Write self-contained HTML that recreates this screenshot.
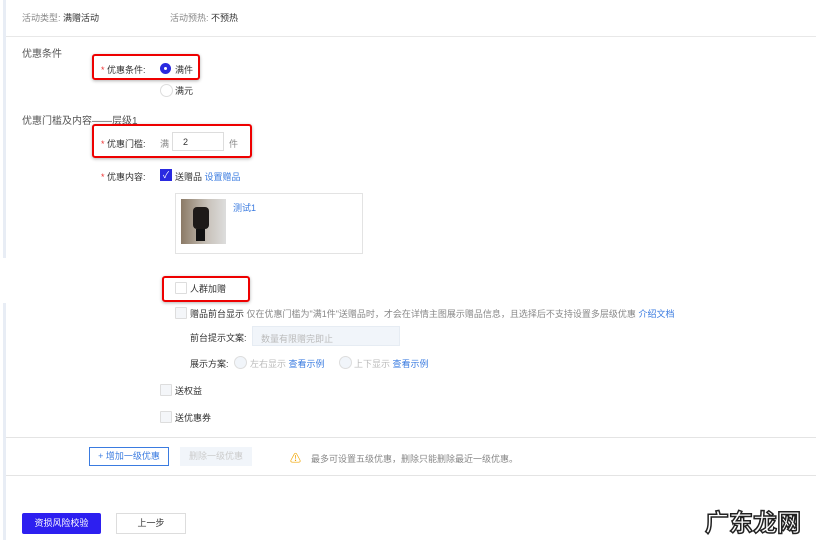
<!DOCTYPE html>
<html><head><meta charset="utf-8"><style>
body{margin:0;width:838px;height:545px;background:#fff;position:relative;overflow:hidden;font-family:"Liberation Sans","Noto Sans CJK SC",sans-serif;font-size:9px;color:#333}
.a{position:absolute;white-space:nowrap}
.g{color:#888}.b{color:#3a7be0}.r{color:#e33}
.red{position:absolute;border:2px solid #e00;border-radius:3px;box-shadow:0 1px 3px rgba(0,0,0,.3)}
.cb{position:absolute;width:10px;height:10px;border:1px solid #ddd;background:#f4f6f9;border-radius:1px}
.rd{position:absolute;width:11px;height:11px;border:1px solid #ddd;border-radius:50%;background:#fff}
</style></head><body>
<div class="a" style="left:3px;top:0;width:3px;height:258px;background:#e8edf5"></div>
<div class="a" style="left:3px;top:303px;width:3px;height:237px;background:#e8edf5"></div>
<div class="a" style="left:6px;top:36px;width:810px;height:1px;background:#e8e8e8"></div>
<div class="a g" style="left:22px;top:11px">活动类型: <span style="color:#333">满赠活动</span></div>
<div class="a g" style="left:170px;top:11px">活动预热: <span style="color:#333">不预热</span></div>
<div class="a" style="left:22px;top:45px;font-size:10px;color:#555">优惠条件</div>
<div class="red" style="left:92px;top:54px;width:104px;height:22px"></div>
<div class="a" style="left:101px;top:63px"><span class="r">*</span> 优惠条件:</div>
<div class="a" style="left:160px;top:63px;width:11px;height:11px;border-radius:50%;background:#2a2ae0"><div style="position:absolute;left:4px;top:4px;width:3px;height:3px;background:#fff;border-radius:50%"></div></div>
<div class="a" style="left:175px;top:63px">满件</div>
<div class="rd" style="left:160px;top:84px"></div>
<div class="a" style="left:175px;top:84px">满元</div>
<div class="a" style="left:22px;top:112px;font-size:10px;color:#555">优惠门槛及内容——层级1</div>
<div class="red" style="left:92px;top:124px;width:156px;height:30px"></div>
<div class="a" style="left:101px;top:137px"><span class="r">*</span> 优惠门槛:</div>
<div class="a g" style="left:160px;top:137px">满</div>
<div class="a" style="left:172px;top:132px;width:52px;height:19px;border:1px solid #ddd;box-sizing:border-box;padding:4px 0 0 10px">2</div>
<div class="a g" style="left:229px;top:137px">件</div>
<div class="a" style="left:101px;top:170px"><span class="r">*</span> 优惠内容:</div>
<div class="a" style="left:160px;top:169px;width:12px;height:12px;background:#2a2ae0;color:#fff;font-size:9px;line-height:12px;text-align:center">✓</div>
<div class="a" style="left:175px;top:170px">送赠品 <span class="b">设置赠品</span></div>
<div class="a" style="left:175px;top:193px;width:186px;height:59px;border:1px solid #e3e3e3"></div>
<div class="a" style="left:181px;top:199px;width:45px;height:45px;background:linear-gradient(90deg,#8b7a66,#c9c3bb 60%,#ddd)"><div style="position:absolute;left:12px;top:8px;width:16px;height:22px;background:#1e1a18;border-radius:4px"></div><div style="position:absolute;left:15px;top:30px;width:9px;height:12px;background:#111"></div></div>
<div class="a b" style="left:233px;top:201px">测试1</div>
<div class="red" style="left:162px;top:276px;width:84px;height:22px"></div>
<div class="cb" style="left:175px;top:282px;background:#fff"></div>
<div class="a" style="left:190px;top:282px">人群加赠</div>
<div class="cb" style="left:175px;top:307px"></div>
<div class="a" style="left:190px;top:307px">赠品前台显示 <span class="g">仅在优惠门槛为"满1件"送赠品时，才会在详情主图展示赠品信息，且选择后不支持设置多层级优惠</span> <span class="b">介绍文档</span></div>
<div class="a" style="left:190px;top:331px">前台提示文案:</div>
<div class="a" style="left:252px;top:326px;width:148px;height:20px;background:#f1f5fa;border:1px solid #e6ecf3;box-sizing:border-box;padding:5px 0 0 8px;color:#bbb">数量有限赠完即止</div>
<div class="a" style="left:190px;top:357px">展示方案:</div>
<div class="rd" style="left:234px;top:356px;background:#f1f5fa"></div>
<div class="a" style="left:250px;top:357px;color:#bbb">左右显示 <span class="b">查看示例</span></div>
<div class="rd" style="left:339px;top:356px;background:#f1f5fa"></div>
<div class="a" style="left:354px;top:357px;color:#bbb">上下显示 <span class="b">查看示例</span></div>
<div class="cb" style="left:160px;top:384px"></div>
<div class="a" style="left:175px;top:384px">送权益</div>
<div class="cb" style="left:160px;top:411px"></div>
<div class="a" style="left:175px;top:411px">送优惠券</div>
<div class="a" style="left:6px;top:437px;width:810px;height:1px;background:#e4e4e4"></div>
<div class="a" style="left:89px;top:447px;width:80px;height:19px;border:1px solid #3a7be0;box-sizing:border-box;color:#3a7be0;text-align:center;line-height:17px">+ 增加一级优惠</div>
<div class="a" style="left:180px;top:447px;width:72px;height:19px;background:#f1f5fa;color:#ccc;text-align:center;line-height:19px">删除一级优惠</div>
<div class="a" style="left:290px;top:450px;color:#f0a500;font-size:11px">⚠</div>
<div class="a g" style="left:311px;top:452px">最多可设置五级优惠，删除只能删除最近一级优惠。</div>
<div class="a" style="left:6px;top:475px;width:810px;height:1px;background:#e4e4e4"></div>
<div class="a" style="left:22px;top:513px;width:79px;height:21px;background:#2d1ff0;color:#fff;text-align:center;line-height:21px;border-radius:2px">资损风险校验</div>
<div class="a" style="left:116px;top:513px;width:70px;height:21px;border:1px solid #ddd;box-sizing:border-box;text-align:center;line-height:19px">上一步</div>
<div class="a" style="left:705px;top:503px;font-size:24px;font-weight:bold;color:#fff;-webkit-text-stroke:1.5px #222">广东龙网</div>
</body></html>
